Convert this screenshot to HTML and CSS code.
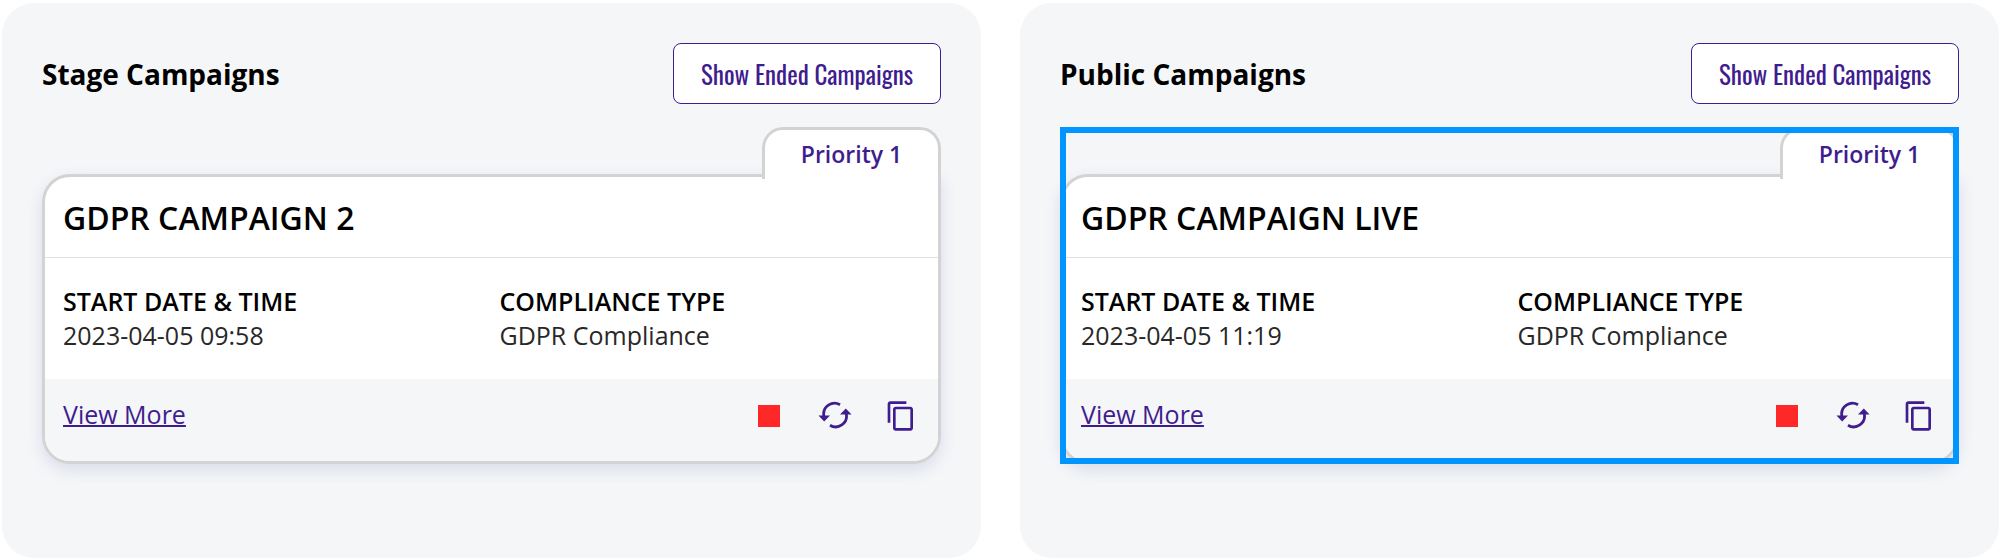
FILE: index.html
```html
<!DOCTYPE html>
<html lang="en">
<head>
    <meta charset="UTF-8">
    <meta name="viewport" content="width=device-width, initial-scale=1.0">
    <title>Campaigns</title>
    <link rel="stylesheet" href="styles.css">
</head>
<body>
    <!-- shared icons -->
    <svg class="sprite" aria-hidden="true">
        <symbol id="icon-stop" viewBox="0 0 34 32">
            <rect x="6" y="5" width="22" height="22"/>
        </symbol>
        <symbol id="icon-refresh" viewBox="0 0 34 32">
            <path d="M5.700 16V15A10.800 10.800 0 0 1 22 4.800M28.300 13V14A10.800 10.800 0 0 1 12 25.200" fill="none" stroke="currentColor" stroke-width="2.800"/>
            <path d="M.5 15.500h11.500L6.200 21.500zM33.500 14.500H22l5.800-6z"/>
        </symbol>
        <symbol id="icon-copy" viewBox="0 0 24 24">
            <path d="M16 1H4c-1.100 0-2 .9-2 2v14h2V3h12V1zm3 4H8c-1.100 0-2 .9-2 2v14c0 1.100.9 2 2 2h11c1.100 0 2-.9 2-2V7c0-1.100-.9-2-2-2zm0 16H8V7h11v14z"/>
        </symbol>
    </svg>

    <main class="campaigns">
        <section class="panel">
            <header class="panel-head">
                <h2>Stage Campaigns</h2>
                <button type="button" class="btn-ended">Show Ended Campaigns</button>
            </header>
            <article class="campaign">
                <div class="priority">Priority 1</div>
                <div class="card">
                    <h3>GDPR CAMPAIGN 2</h3>
                    <dl class="details">
                        <div>
                            <dt>START DATE &amp; TIME</dt>
                            <dd>2023-04-05 09:58</dd>
                        </div>
                        <div>
                            <dt>COMPLIANCE TYPE</dt>
                            <dd>GDPR Compliance</dd>
                        </div>
                    </dl>
                    <footer class="card-foot">
                        <a href="#">View More</a>
                        <div class="actions">
                            <button type="button" class="stop" aria-label="Stop"><svg><use href="#icon-stop"/></svg></button>
                            <button type="button" aria-label="Refresh"><svg><use href="#icon-refresh"/></svg></button>
                            <button type="button" aria-label="Copy"><svg><use href="#icon-copy"/></svg></button>
                        </div>
                    </footer>
                </div>
            </article>
        </section>

        <section class="panel">
            <header class="panel-head">
                <h2>Public Campaigns</h2>
                <button type="button" class="btn-ended">Show Ended Campaigns</button>
            </header>
            <article class="campaign selected">
                <div class="priority">Priority 1</div>
                <div class="card">
                    <h3>GDPR CAMPAIGN LIVE</h3>
                    <dl class="details">
                        <div>
                            <dt>START DATE &amp; TIME</dt>
                            <dd>2023-04-05 11:19</dd>
                        </div>
                        <div>
                            <dt>COMPLIANCE TYPE</dt>
                            <dd>GDPR Compliance</dd>
                        </div>
                    </dl>
                    <footer class="card-foot">
                        <a href="#">View More</a>
                        <div class="actions">
                            <button type="button" class="stop" aria-label="Stop"><svg><use href="#icon-stop"/></svg></button>
                            <button type="button" aria-label="Refresh"><svg><use href="#icon-refresh"/></svg></button>
                            <button type="button" aria-label="Copy"><svg><use href="#icon-copy"/></svg></button>
                        </div>
                    </footer>
                </div>
            </article>
        </section>
    </main>
</body>
</html>
```
FILE: styles.css
```css
*{
    box-sizing: border-box;
}

body{
    margin: 0;
    background-color: white;
    color: black;
    font-family: "Open Sans", "Noto Sans", sans-serif;
}

h2, h3, dl, dd{
    margin: 0;
}

.sprite{
    display: none;
}

.campaigns{
    display: grid;
    grid-template-columns: 1fr 1fr;
    gap: 39px;
    padding: 3px 1px 2px 2px;
}

.panel{
    padding: 40px 40px 94px;
    background-color: #f5f6f8;
    border-radius: 32px;
}

.panel-head{
    display: flex;
    justify-content: space-between;
    align-items: center;
    margin-bottom: 23px;
}

.panel-head h2{
    font-size: 28px;
    line-height: 40px;
    font-weight: 700;
}

.btn-ended{
    height: 61px;
    padding: 0 27px;
    border: 1px solid #3f1d8f;
    border-radius: 8px;
    background-color: white;
    color: #3f1d8f;
    font-family: Oswald, "Liberation Sans Narrow", "Liberation Sans", sans-serif;
    font-size: 25px;
    font-weight: 400;
}

.campaign{
    position: relative;
}

/* the tab overlaps the top border of the card */
.priority{
    position: relative;
    z-index: 1;
    width: 179px;
    height: 52px;
    margin-left: auto;
    margin-bottom: -5px;
    border: 3px solid #d3d3d3;
    border-bottom: 0;
    border-radius: 21px 21px 0 0;
    background-color: white;
    color: #3f1d8f;
    font-size: 23px;
    font-weight: 600;
    line-height: 48px;
    text-align: center;
}

.card{
    border: 3px solid #d3d3d3;
    border-radius: 28px 0 28px 28px;
    background-color: white;
    box-shadow: 0 6px 16px rgba(60, 70, 160, 0.14);
}

.card h3{
    padding: 19px 18px 17px;
    border-bottom: 1px solid #dbe2e8;
    font-size: 32px;
    font-weight: 600;
    line-height: 44px;
}

.details{
    display: grid;
    grid-template-columns: 1fr 1fr;
    gap: 16px;
    padding: 26px 18px 27px;
    font-size: 25px;
    line-height: 34px;
}

.details dt{
    font-weight: 600;
}

.details dd{
    color: #282828;
}

.card-foot{
    display: flex;
    justify-content: space-between;
    align-items: center;
    height: 82px;
    padding: 0 20px 8px 18px;
    border-radius: 0 0 25px 25px;
    background-color: #f5f6f8;
    font-size: 25px;
}

.card-foot a{
    margin-bottom: 5px;
    color: #3f1d8f;
    text-decoration-thickness: 2px;
}

.actions{
    display: flex;
    gap: 32px;
}

.actions button{
    padding: 0;
    border: 0;
    background: none;
    color: #3f1d8f;
}

.actions .stop{
    color: #ff2727;
}

.actions svg{
    display: block;
    width: 34px;
    height: 32px;
    fill: currentColor;
}

/* highlight frame drawn over the whole campaign */
.selected::after{
    content: "";
    position: absolute;
    inset: 0;
    z-index: 2;
    border: 6px solid #0095ff;
    pointer-events: none;
}
```
